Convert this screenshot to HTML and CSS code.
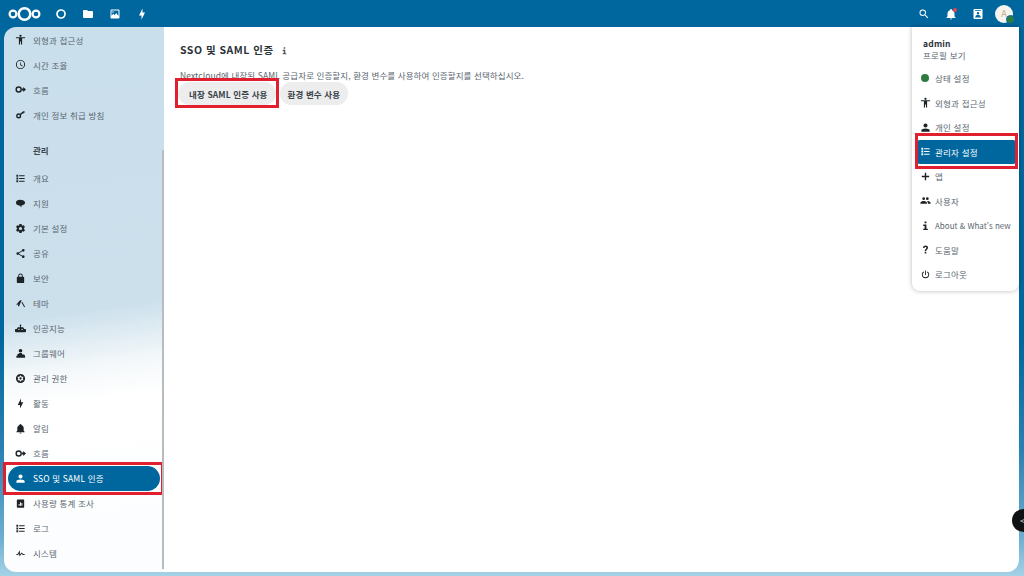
FILE: index.html
```html
<!DOCTYPE html>
<html lang="ko">
<head>
<meta charset="utf-8">
<title>SSO 및 SAML 인증</title>
<link rel="stylesheet" href="styles.css">
</head>
<body>
<svg class="sprite" aria-hidden="true">
  <symbol id="i-human" viewBox="0 0 24 24"><path d="M12,1.5A2.5,2.5 0 0,1 14.5,4A2.5,2.5 0 0,1 12,6.5A2.5,2.5 0 0,1 9.5,4A2.5,2.5 0 0,1 12,1.5M22,9.5H15.5V23H13V16.5H11V23H8.5V9.5H2V7H22V9.5Z"/></symbol>
  <symbol id="i-clock" viewBox="0 0 24 24"><path d="M12,20A8,8 0 0,0 20,12A8,8 0 0,0 12,4A8,8 0 0,0 4,12A8,8 0 0,0 12,20M12,2A10,10 0 0,1 22,12A10,10 0 0,1 12,22C6.47,22 2,17.5 2,12A10,10 0 0,1 12,2M12.5,7V12.25L17,14.92L16.25,16.15L11,13V7H12.5Z"/></symbol>
  <symbol id="i-flow" viewBox="0 0 24 24"><path d="M8,5A7,7 0 1,1 8,19A7,7 0 1,1 8,5M8,8A4,4 0 1,0 8,16A4,4 0 1,0 8,8Z" fill-rule="evenodd"/><path d="M15,10H18V6.5L24,12L18,17.5V14H15Z"/></symbol>
  <symbol id="i-key" viewBox="0 0 24 24"><path d="M8,9.5A5.5,5.5 0 1,1 8,20.5A5.5,5.5 0 1,1 8,9.5M8,12.5A2.5,2.5 0 1,0 8,17.5A2.5,2.5 0 1,0 8,12.5Z" fill-rule="evenodd"/><path d="M11,10.5L18,5H21V8H19V10H16.5L13,13Z"/></symbol>
  <symbol id="i-list" viewBox="0 0 24 24"><path d="M3,4H7V8H3V4M9,5V7H21V5H9M3,10H7V14H3V10M9,11V13H21V11H9M3,16H7V20H3V16M9,17V19H21V17H9"/></symbol>
  <symbol id="i-chat" viewBox="0 0 24 24"><path d="M11,4C17,4 22,6.5 22,10.5C22,14.5 17,16.5 14,16.5V20.5C12.5,19 10.5,17 9.5,16.5C5.5,16 2,14 2,10.5C2,6.5 6,4 11,4Z"/></symbol>
  <symbol id="i-cog" viewBox="0 0 24 24"><path d="M12,15.5A3.5,3.5 0 0,1 8.5,12A3.5,3.5 0 0,1 12,8.5A3.5,3.5 0 0,1 15.5,12A3.5,3.5 0 0,1 12,15.5M19.43,12.97C19.47,12.65 19.5,12.33 19.5,12C19.5,11.67 19.47,11.34 19.43,11L21.54,9.37C21.73,9.22 21.78,8.95 21.66,8.73L19.66,5.27C19.54,5.05 19.27,4.96 19.05,5.05L16.56,6.05C16.04,5.66 15.5,5.32 14.87,5.07L14.5,2.42C14.46,2.18 14.25,2 14,2H10C9.75,2 9.54,2.18 9.5,2.42L9.13,5.07C8.5,5.32 7.96,5.66 7.44,6.05L4.95,5.05C4.73,4.96 4.46,5.05 4.34,5.27L2.34,8.73C2.21,8.95 2.27,9.22 2.46,9.37L4.57,11C4.53,11.34 4.5,11.67 4.5,12C4.5,12.33 4.53,12.65 4.57,12.97L2.46,14.63C2.27,14.78 2.21,15.05 2.34,15.27L4.34,18.73C4.46,18.95 4.73,19.03 4.95,18.95L7.44,17.94C7.96,18.34 8.5,18.68 9.13,18.93L9.5,21.58C9.54,21.82 9.75,22 10,22H14C14.25,22 14.46,21.82 14.5,21.58L14.87,18.93C15.5,18.67 16.04,18.34 16.56,17.94L19.05,18.95C19.27,19.03 19.54,18.95 19.66,18.73L21.66,15.27C21.78,15.05 21.73,14.78 21.54,14.63L19.43,12.97Z"/></symbol>
  <symbol id="i-share" viewBox="0 0 24 24"><path d="M18,16.08C17.24,16.08 16.56,16.38 16.04,16.85L8.91,12.7C8.96,12.47 9,12.24 9,12C9,11.76 8.96,11.53 8.91,11.3L15.96,7.19C16.5,7.69 17.21,8 18,8A3,3 0 0,0 21,5A3,3 0 0,0 18,2A3,3 0 0,0 15,5C15,5.24 15.04,5.47 15.09,5.7L8.04,9.81C7.5,9.31 6.79,9 6,9A3,3 0 0,0 3,12A3,3 0 0,0 6,15C6.79,15 7.5,14.69 8.04,14.19L15.16,18.34C15.11,18.55 15.08,18.77 15.08,19C15.08,20.61 16.39,21.91 18,21.91C19.61,21.91 20.92,20.61 20.92,19A2.92,2.92 0 0,0 18,16.08Z"/></symbol>
  <symbol id="i-lock" viewBox="0 0 24 24"><path d="M18,8A2,2 0 0,1 20,10V20A2,2 0 0,1 18,22H6A2,2 0 0,1 4,20V10C4,8.89 4.9,8 6,8H7V6A5,5 0 0,1 12,1A5,5 0 0,1 17,6V8H18M12,3A3,3 0 0,0 9,6V8H15V6A3,3 0 0,0 12,3Z"/></symbol>
  <symbol id="i-theme" viewBox="0 0 24 24"><path d="M3,14L11,5L15,5.5L13,8L9,18L6.5,18L7,12.5L4.5,16Z"/><path d="M14,9.5L16,8.5L22,19L20,20Z"/></symbol>
  <symbol id="i-ai" viewBox="0 0 24 24"><path d="M12,3A2,2 0 0,1 13,6.7V9H15A5,5 0 0,1 20,13H21.5A2.5,2.5 0 0,1 21.5,20H2.5A2.5,2.5 0 0,1 2.5,13H4A5,5 0 0,1 9,9H11V6.7A2,2 0 0,1 12,3M8.5,12.5A1.5,1.5 0 1,0 8.5,15.5A1.5,1.5 0 1,0 8.5,12.5M15.5,12.5A1.5,1.5 0 1,0 15.5,15.5A1.5,1.5 0 1,0 15.5,12.5Z" fill-rule="evenodd"/></symbol>
  <symbol id="i-group" viewBox="0 0 24 24"><path d="M12,2A4,4 0 0,1 16,6A4,4 0 0,1 12,10A4,4 0 0,1 8,6A4,4 0 0,1 12,2M5,14L10,11H15L16,14H20L22,17V21H3V17H5Z"/></symbol>
  <symbol id="i-admin" viewBox="0 0 24 24"><path d="M12,2A10,10 0 1,1 12,22A10,10 0 1,1 12,2M12,5L9.5,8H5.5L7,12L5.5,16H9.5L12,19L14.5,16H18.5L17,12L18.5,8H14.5Z" fill-rule="evenodd"/><circle cx="12" cy="12" r="2.5"/></symbol>
  <symbol id="i-flash" viewBox="0 0 24 24"><path d="M11 15H6L13 1V9H18L11 23V15Z"/></symbol>
  <symbol id="i-bell" viewBox="0 0 24 24"><path d="M21,19V20H3V19L5,17V11C5,7.9 7.03,5.17 10,4.29C10,4.19 10,4.1 10,4A2,2 0 0,1 12,2A2,2 0 0,1 14,4C14,4.1 14,4.19 14,4.29C16.97,5.17 19,7.9 19,11V17L21,19M14,21A2,2 0 0,1 12,23A2,2 0 0,1 10,21"/></symbol>
  <symbol id="i-user" viewBox="0 0 24 24"><path d="M12,3A4.5,4.5 0 0,1 16.5,7.5A4.5,4.5 0 0,1 12,12A4.5,4.5 0 0,1 7.5,7.5A4.5,4.5 0 0,1 12,3M12,14C16.42,14 21,15.79 21,18V21H3V18C3,15.79 7.58,14 12,14Z"/></symbol>
  <symbol id="i-note" viewBox="0 0 24 24"><path d="M6,3H19A1,1 0 0,1 20,4V20A1,1 0 0,1 19,21H6A2,2 0 0,1 4,19V5A2,2 0 0,1 6,3M8,13V17H10V13H8M11,9V17H13V9H11M14,11V17H16V11H14Z" fill-rule="evenodd"/></symbol>
  <symbol id="i-pulse" viewBox="0 0 24 24"><path d="M3,13H5.79L10.1,4.79L11.28,13.75L14.5,9.66L17.83,13H21V15H17L14.67,12.67L9.92,18.73L8.94,11.31L7,15H3V13Z"/></symbol>
  <symbol id="i-plus" viewBox="0 0 24 24"><path d="M20,13.5H13.5V20H10.5V13.5H4V10.5H10.5V4H13.5V10.5H20V13.5Z"/></symbol>
  <symbol id="i-users" viewBox="0 0 24 24"><path d="M16,13C15.71,13 15.38,13 15.03,13.05C16.19,13.89 17,15 17,16.5V19H23V16.5C23,14.17 18.33,13 16,13M8,13C5.67,13 1,14.17 1,16.5V19H15V16.5C15,14.17 10.33,13 8,13M8,11A3,3 0 0,0 11,8A3,3 0 0,0 8,5A3,3 0 0,0 5,8A3,3 0 0,0 8,11M16,11A3,3 0 0,0 19,8A3,3 0 0,0 16,5A3,3 0 0,0 13,8A3,3 0 0,0 16,11Z"/></symbol>
  <symbol id="i-info" viewBox="0 0 24 24"><path d="M10,3H14V7H10ZM7,10H14V19H17V22H7V19H10V13H7Z"/></symbol>
  <symbol id="i-help" viewBox="0 0 24 24"><path d="M10.3,17H13.7V20.5H10.3ZM12,3.5C15.3,3.5 17.5,5.4 17.5,8.2C17.5,10.2 16.4,11.3 15.1,12.3C14,13.2 13.7,13.8 13.7,15.5H10.3C10.3,13 11.2,11.8 12.6,10.7C13.6,9.9 14.2,9.3 14.2,8.2C14.2,7.1 13.3,6.4 12,6.4C10.7,6.4 9.8,7.3 9.8,8.7H6.5C6.5,5.7 8.8,3.5 12,3.5Z"/></symbol>
  <symbol id="i-power" viewBox="0 0 24 24"><path d="M16.56,5.44L15.11,6.89C16.84,7.94 18,9.83 18,12A6,6 0 0,1 12,18A6,6 0 0,1 6,12C6,9.83 7.16,7.94 8.88,6.88L7.44,5.44C5.36,6.88 4,9.28 4,12A8,8 0 0,0 12,20A8,8 0 0,0 20,12C20,9.28 18.64,6.88 16.56,5.44M13,3H11V13H13"/></symbol>
  <symbol id="i-folder" viewBox="0 0 24 24"><path d="M10,4H4C2.89,4 2,4.89 2,6V18A2,2 0 0,0 4,20H20A2,2 0 0,0 22,18V8C22,6.89 21.1,6 20,6H12L10,4Z"/></symbol>
  <symbol id="i-image" viewBox="0 0 24 24"><path d="M5,3H19A2,2 0 0,1 21,5V19A2,2 0 0,1 19,21H5A2,2 0 0,1 3,19V5A2,2 0 0,1 5,3M5,5V15.5L8.5,11.5L11,14.5L14.5,10L19,16V5H5M8,6.5A1.5,1.5 0 1,1 8,9.5A1.5,1.5 0 1,1 8,6.5Z" fill-rule="evenodd"/></symbol>
  <symbol id="i-search" viewBox="0 0 24 24"><path d="M9.5,3A6.5,6.5 0 0,1 16,9.5C16,11.11 15.41,12.59 14.44,13.73L14.71,14H15.5L20.5,19L19,20.5L14,15.5V14.71L13.73,14.44C12.59,15.41 11.11,16 9.5,16A6.5,6.5 0 0,1 3,9.5A6.5,6.5 0 0,1 9.5,3M9.5,5C7,5 5,7 5,9.5C5,12 7,14 9.5,14C12,14 14,12 14,9.5C14,7 12,5 9.5,5Z"/></symbol>
  <symbol id="i-contacts" viewBox="0 0 24 24"><path d="M5,2H19A2,2 0 0,1 21,4V20A2,2 0 0,1 19,22H5A2,2 0 0,1 3,20V4A2,2 0 0,1 5,2M6,4.5V6H18V4.5H6M12,8A2.5,2.5 0 1,0 12,13A2.5,2.5 0 1,0 12,8M7,18H17V16.5C17,15 14.5,14 12,14C9.5,14 7,15 7,16.5V18M6,19V20H18V19H6Z" fill-rule="evenodd"/></symbol>
</svg>

<header class="topbar">
  <nav class="top-left">
    <svg class="logo" viewBox="0 0 33 16" aria-label="Nextcloud"><g fill="none" stroke="#fff"><circle cx="5" cy="8" r="3.4" stroke-width="2.2"/><circle cx="16.5" cy="8" r="5.8" stroke-width="2.6"/><circle cx="28" cy="8" r="3.4" stroke-width="2.2"/></g></svg>
    <div class="app-icons">
      <svg class="top-icon" viewBox="0 0 24 24"><circle cx="12" cy="12" r="8" fill="none" stroke="#fff" stroke-width="3.4"/></svg>
      <svg class="top-icon"><use href="#i-folder"/></svg>
      <svg class="top-icon"><use href="#i-image"/></svg>
      <svg class="top-icon"><use href="#i-flash"/></svg>
    </div>
  </nav>
  <div class="top-right">
    <svg class="top-icon"><use href="#i-search"/></svg>
    <span class="bell"><svg class="top-icon"><use href="#i-bell"/></svg><span class="bell-dot"></span></span>
    <svg class="top-icon"><use href="#i-contacts"/></svg>
    <span class="avatar">A<span class="avatar-status"></span></span>
  </div>
</header>

<div class="app">
  <aside class="sidebar">
    <ul class="nav">
      <li class="nav-item"><svg class="ico"><use href="#i-human"/></svg>외형과 접근성</li>
      <li class="nav-item"><svg class="ico"><use href="#i-clock"/></svg>시간 조율</li>
      <li class="nav-item"><svg class="ico"><use href="#i-flow"/></svg>흐름</li>
      <li class="nav-item"><svg class="ico"><use href="#i-key"/></svg>개인 정보 취급 방침</li>
    </ul>
    <h3 class="nav-caption">관리</h3>
    <ul class="nav">
      <li class="nav-item"><svg class="ico"><use href="#i-list"/></svg>개요</li>
      <li class="nav-item"><svg class="ico"><use href="#i-chat"/></svg>지원</li>
      <li class="nav-item"><svg class="ico"><use href="#i-cog"/></svg>기본 설정</li>
      <li class="nav-item"><svg class="ico"><use href="#i-share"/></svg>공유</li>
      <li class="nav-item"><svg class="ico"><use href="#i-lock"/></svg>보안</li>
      <li class="nav-item"><svg class="ico"><use href="#i-theme"/></svg>테마</li>
      <li class="nav-item"><svg class="ico"><use href="#i-ai"/></svg>인공지능</li>
      <li class="nav-item"><svg class="ico"><use href="#i-group"/></svg>그룹웨어</li>
      <li class="nav-item"><svg class="ico"><use href="#i-admin"/></svg>관리 권한</li>
      <li class="nav-item"><svg class="ico"><use href="#i-flash"/></svg>활동</li>
      <li class="nav-item"><svg class="ico"><use href="#i-bell"/></svg>알림</li>
      <li class="nav-item"><svg class="ico"><use href="#i-flow"/></svg>흐름</li>
      <li class="nav-item is-active"><svg class="ico"><use href="#i-user"/></svg>SSO 및 SAML 인증</li>
      <li class="nav-item"><svg class="ico"><use href="#i-note"/></svg>사용량 통계 조사</li>
      <li class="nav-item"><svg class="ico"><use href="#i-list"/></svg>로그</li>
      <li class="nav-item"><svg class="ico"><use href="#i-pulse"/></svg>시스템</li>
    </ul>
    <span class="scroll-thumb"></span>
  </aside>

  <main class="content">
    <h2 class="title">SSO 및 SAML 인증 <svg class="title-info"><use href="#i-info"/></svg></h2>
    <p class="desc">Nextcloud에 내장된 SAML 공급자로 인증할지, 환경 변수를 사용하여 인증할지를 선택하십시오.</p>
    <div class="actions">
      <button class="btn is-marked">내장 SAML 인증 사용</button>
      <button class="btn">환경 변수 사용</button>
    </div>
  </main>
</div>

<div class="menu">
  <div class="menu-user"><strong>admin</strong><span>프로필 보기</span></div>
  <ul class="menu-list">
    <li class="menu-item"><span class="status-dot"></span>상태 설정</li>
    <li class="menu-item"><svg class="ico"><use href="#i-human"/></svg>외형과 접근성</li>
    <li class="menu-item"><svg class="ico"><use href="#i-user"/></svg>개인 설정</li>
    <li class="menu-item is-active"><svg class="ico"><use href="#i-list"/></svg>관리자 설정</li>
    <li class="menu-item"><svg class="ico"><use href="#i-plus"/></svg>앱</li>
    <li class="menu-item"><svg class="ico"><use href="#i-users"/></svg>사용자</li>
    <li class="menu-item is-latin"><svg class="ico"><use href="#i-info"/></svg>About &amp; What's new</li>
    <li class="menu-item"><svg class="ico"><use href="#i-help"/></svg>도움말</li>
    <li class="menu-item"><svg class="ico"><use href="#i-power"/></svg>로그아웃</li>
  </ul>
</div>

<div class="dev-toggle">&lt;</div>
</body>
</html>
```
FILE: styles.css
```css
* { box-sizing: border-box; }
html, body { margin: 0; height: 100%; }
body {
  height: 576px;
  overflow: hidden;
  display: flex;
  flex-direction: column;
  font-family: "Noto Sans CJK KR", "Noto Sans", sans-serif;
  font-size: 8.5px;
  color: #5a6670;
  background: linear-gradient(180deg, #00679e 0, #00679e 340px, #2a80b3 450px, #6fb0d2 540px, #a5d2e6 576px);
}
ul { list-style: none; margin: 0; padding: 0; }
.sprite { display: none; }

.topbar {
  flex: 0 0 27px;
  display: flex;
  justify-content: space-between;
  align-items: center;
  padding: 0 11px 0 8px;
  background: #00679e;
}
.top-left, .app-icons, .top-right { display: flex; align-items: center; }
.logo { width: 33px; height: 16px; }
.app-icons { margin-left: 14px; gap: 15px; }
.top-icon { width: 12px; height: 12px; fill: #fff; display: block; }
.top-right { gap: 15px; }
.bell { position: relative; display: block; }
.bell-dot {
  position: absolute; top: 0; right: 0;
  width: 4px; height: 4px; border-radius: 50%; background: #e9424f;
}
.avatar {
  position: relative;
  width: 18px; height: 18px; margin-left: -4px;
  border-radius: 50%;
  background: #f6f4ef;
  color: #c9a77c;
  font-size: 9px; line-height: 18px; text-align: center;
}
.avatar-status {
  position: absolute; right: -2px; bottom: -1px;
  width: 9px; height: 9px; border-radius: 50%;
  background: #2d7b41; border: 1px solid #00679e;
}

.app {
  flex: 1;
  display: flex;
  margin: 0 5px 4px 4px;
}
.sidebar {
  position: relative;
  flex: 0 0 160px;
  border-radius: 12px 0 0 12px;
  background: linear-gradient(172deg, #c9dfeb 0, #cce0ec 52%, #f4f8fa 62%, #fff 68%, #fbfdfe 100%);
}
.nav-item {
  height: 25px;
  display: flex;
  align-items: center;
  padding-left: 10.5px;
  letter-spacing: .15px;
}
.nav-item .ico { margin-right: 7.5px; }
.ico { width: 11px; height: 11px; fill: #1d2327; flex: none; }
.nav-item.is-active {
  position: relative;
  margin: 0 4px;
  padding-left: 6.5px;
  border-radius: 13px;
  background: #00679e;
  color: #fff;
}
.nav-item.is-active .ico { fill: #fff; }
.nav-item.is-active::after,
.menu-item.is-active::after,
.btn.is-marked::after {
  content: "";
  position: absolute;
  border: 3px solid #e0202f;
  pointer-events: none;
}
.nav-item.is-active::after { inset: -4px -4px -4px -5px; }
.nav-caption {
  margin: 0;
  height: 38.5px;
  padding: 16px 0 0 29px;
  font-size: 8.5px;
  font-weight: 700;
  line-height: 14px;
  color: #3d4750;
}
.scroll-thumb {
  position: absolute; top: 123px; right: 0; bottom: 3px;
  width: 2px; background: #b7bcc0;
}

.content {
  flex: 1;
  padding: 15px 0 0 14px;
  background: #fff;
  border-radius: 0 12px 12px 0;
}
.title {
  margin: 0 0 0 2px;
  font-size: 10.5px;
  font-weight: 700;
  line-height: 16px;
  letter-spacing: .5px;
  color: #2b333a;
  display: flex;
  align-items: center;
}
.title-info { width: 9px; height: 9px; margin-left: 6px; fill: #555; }
.desc {
  margin: 12px 0 0 2px;
  line-height: 10px;
  color: #5a6670;
  letter-spacing: .1px;
}
.actions { display: flex; gap: 4px; margin-top: 2px; }
.btn {
  position: relative;
  height: 23px;
  padding: 0 8px;
  border: 0;
  border-radius: 12px;
  background: #ededed;
  font: 700 8.5px "Noto Sans CJK KR", "Noto Sans", sans-serif;
  letter-spacing: .12px;
  color: #3b444b;
}
.btn.is-marked { padding-left: 11px; }
.btn.is-marked::after { inset: -4px -3px -3px -3px; }

.menu {
  position: absolute;
  top: 27px; left: 912px;
  width: 107px; height: 264px;
  padding-top: 10px;
  background: #fff;
  border-radius: 0 0 8px 8px;
  box-shadow: 0 0 5px rgba(0,0,0,.28);
}
.menu-user { display: flex; flex-direction: column; padding-left: 11px; line-height: 12px; letter-spacing: .2px; }
.menu-user strong { color: #2b333a; }
.menu-list { margin-top: 5px; }
.menu-item {
  height: 24.5px;
  display: flex;
  align-items: center;
  padding-left: 7.5px;
  white-space: nowrap;
  letter-spacing: .2px;
}
.menu-item .ico { margin-right: 4.5px; }
.menu-item.is-latin { font-size: 8px; letter-spacing: 0; }
.status-dot { width: 8px; height: 8px; margin: 0 6px 0 1.5px; border-radius: 50%; background: #2d7b41; flex: none; }
.menu-item.is-active {
  position: relative;
  margin: 0 3px 0 5px;
  padding-left: 2.5px;
  border-radius: 3px;
  background: #00679e;
  color: #fff;
}
.menu-item.is-active .ico { fill: #fff; }
.menu-item.is-active::after { inset: -7px -2px -5px -2px; }

.dev-toggle {
  position: absolute;
  left: 1012px; top: 509px;
  width: 23px; height: 23px;
  padding-left: 8px;
  border-radius: 50%;
  background: #101214;
  color: #ddd;
  font-size: 9px;
  line-height: 23px;
}
```
